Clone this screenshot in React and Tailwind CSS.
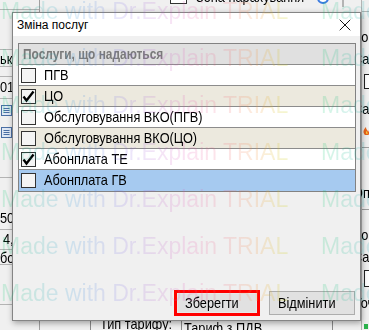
import { X } from "lucide-react";

const sans = "font-['Liberation_Sans',sans-serif]";

const services = [
  { label: "ПГВ", checked: false, tone: "white" },
  { label: "ЦО", checked: true, tone: "beige" },
  { label: "Обслуговування ВКО(ПГВ)", checked: false, tone: "white" },
  { label: "Обслуговування ВКО(ЦО)", checked: false, tone: "beige" },
  { label: "Абонплата ТЕ", checked: true, tone: "white" },
  { label: "Абонплата ГВ", checked: false, tone: "selected" },
];

const rowTone = {
  white: "bg-white",
  beige: "bg-[#ece9de]",
  selected: "bg-[#a6caf0]",
};

// the app uses a narrow face (Arial Narrow); squeeze Liberation Sans to match
function Narrow({ children, className = "" }) {
  return (
    <span className={`inline-block origin-left scale-x-[0.85] whitespace-nowrap ${className}`}>
      {children}
    </span>
  );
}

function CheckBox({ checked }) {
  return (
    <span className="flex h-[15px] w-[15px] shrink-0 items-center justify-center border border-[#333] bg-[#f4f4f4]">
      {checked && (
        <svg width="13" height="13" viewBox="0 0 13 13">
          <path
            d="M1.5 6.5 L4.5 10.5 L11.5 1.5"
            fill="none"
            stroke="#000"
            strokeWidth="2.3"
          />
        </svg>
      )}
    </span>
  );
}

function DocIcon() {
  return (
    <svg width="14" height="13" viewBox="0 0 14 13">
      <rect x="1.5" y="1.5" width="10" height="10" fill="#dfe8f5" stroke="#4a6fa5" />
      <path d="M3.5 4.5h6M3.5 6.5h6M3.5 8.5h6" stroke="#4a6fa5" />
    </svg>
  );
}

function FlameIcon() {
  return (
    <svg width="12" height="12" viewBox="0 0 12 12">
      <path d="M3 11 C0 8 2 5 4 3 C4 6 6 6 6 8 C7 7 7 6 7 5 C9 7 9 10 6 11 Z" fill="#e8641b" />
      <path d="M4.5 10 C3.5 8.5 4 7.5 5 7 C5 8.5 6 9 5.5 10 Z" fill="#ffd23c" />
      <path d="M8 2.5h4M10 0.5v4" stroke="#1fae2b" strokeWidth="1.6" />
    </svg>
  );
}

function Watermark() {
  const rows = [0, 1, 2, 3, 4, 5, 6, 7];
  return (
    <div className="pointer-events-none absolute inset-0 overflow-hidden">
      <div className={`mt-[-12px] pl-[1px] text-[23px] leading-[47px] ${sans}`}>
        {rows.map((r) => (
          <div key={r} className="flex whitespace-nowrap">
            {[0, 1].map((k) => (
              <span
                key={k}
                className="inline-block w-[320px] shrink-0 bg-[linear-gradient(90deg,rgba(0,200,100,0.17)_0%,rgba(40,150,220,0.17)_22%,rgba(130,100,230,0.16)_39%,rgba(230,80,180,0.16)_58%,rgba(240,90,110,0.16)_70%,rgba(245,150,60,0.18)_80%,rgba(200,220,20,0.22)_91%)] bg-clip-text text-transparent"
              >
                Made with Dr.Explain TRIAL
              </span>
            ))}
          </div>
        ))}
      </div>
    </div>
  );
}

function Background() {
  return (
    <div className={`flex h-full text-[15px] text-black ${sans}`}>
      {/* left column of the app behind */}
      <div className="flex w-[40px] shrink-0 flex-col overflow-hidden border-r border-[#a0a0a0]">
        <div className="h-[10px] border-b border-[#b4b4b4]" />
        <div className="h-[40px] border-b border-[#b4b4b4]" />
        <div className="flex h-[17px] items-center border-b border-[#b4b4b4] leading-none">
          <Narrow>ькість</Narrow>
        </div>
        <div className="h-[10px] border-b border-[#b4b4b4]" />
        <div className="flex h-[22px] items-center border-b border-[#b4b4b4]">
          <Narrow>01.01.2020</Narrow>
        </div>
        <div className="flex h-[22px] items-center">
          <DocIcon />
        </div>
        <div className="flex h-[22px] items-center">
          <DocIcon />
        </div>
        <div className="h-[35px] border-b border-[#b4b4b4]" />
        <div className="h-[30px]" />
        <div className="flex h-[22px] items-center border-b border-[#b4b4b4]">
          <Narrow>50,00</Narrow>
        </div>
        <div className="flex h-[20px] items-center border-b border-[#b4b4b4] pl-[3px]">
          <Narrow>4,5</Narrow>
        </div>
        <div className="flex h-[15px] items-center border-b border-[#b4b4b4] leading-none">
          <Narrow>бойлер</Narrow>
        </div>
        <div className="h-[40px] border-b border-[#b4b4b4]" />
        <div className="flex-1" />
      </div>

      {/* center, only its top and bottom edges show */}
      <div className="flex w-[321px] shrink-0 flex-col bg-[#f0f0f0]">
        <div className="flex h-[12px] items-start overflow-hidden">
          <div className="mt-[-10px] flex h-[14px] items-center">
            <span className="ml-[130px] h-[14px] w-[17px] border border-[#333] bg-white" />
            <span className="ml-[9px] w-[109px]">
              <Narrow>Зона нарахування</Narrow>
            </span>
            <span className="ml-[12px] h-[14px] w-[12px] rounded-full border-2 border-[#3b7be0] bg-white" />
            <span className="ml-[13px] h-[20px] w-[2px] border-x border-[#b4b4b4]" />
          </div>
        </div>
        <div className="flex-1" />
        <div className="flex h-[14px] items-start overflow-hidden">
          <span className="ml-[50px] h-full border-l border-[#8a8a8a]" />
          <span className="ml-[9px] mt-[-3px] w-[81px]">
            <Narrow>Тип тарифу:</Narrow>
          </span>
          <span className="h-full w-[148px] border-l border-t border-[#8a8a8a] pl-[2px]">
            <Narrow className="mt-[-3px]">Тариф з ПДВ</Narrow>
          </span>
          <span className="ml-[3px] h-full border-l border-[#8a8a8a]" />
        </div>
      </div>

      {/* right column labels, their starts hidden behind the dialog */}
      <div className="flex flex-1 flex-col border-l border-[#b4b4b4]">
        <div className="h-[12px] border-b border-[#b4b4b4]" />
        <div className="flex h-[34px] items-end leading-[18px]">
          <Narrow className="ml-[-10px]">Норма</Narrow>
        </div>
        <div className="flex h-[22px] items-end leading-[18px]">
          <Narrow className="ml-[-9px]">Сальдо</Narrow>
        </div>
        <div className="flex h-[26px] items-center pl-[2px]">
          <span className="h-[15px] w-[30px] border border-[#222] bg-white" />
        </div>
        <div className="flex h-[24px] items-end leading-[18px]">
          <Narrow className="ml-[-9px]">Сальдо</Narrow>
        </div>
        <div className="flex h-[24px] items-center">
          <FlameIcon />
        </div>
        <div className="h-[6px] border-b border-[#a0a0a0]" />
        <div className="flex h-[54px] items-end leading-[18px]">
          <Narrow className="ml-[-9px]">Оплата</Narrow>
        </div>
        <div className="h-[8px] border-b border-[#a0a0a0]" />
        <div className="flex h-[34px] items-end leading-[18px]">
          <Narrow className="ml-[-10px]">Норма</Narrow>
        </div>
        <div className="flex h-[22px] items-end leading-[18px]">
          <Narrow className="ml-[-9px]">Сальдо</Narrow>
        </div>
        <div className="flex h-[24px] items-center pl-[2px]">
          <span className="h-[17px] w-[30px] border border-[#222] bg-white" />
        </div>
        <div className="flex h-[22px] items-end leading-[18px]">
          <Narrow className="ml-[-8px]">Точка</Narrow>
        </div>
        <div className="flex flex-1 items-end">
          <span className="mb-[1px] ml-[2px] h-[5px] w-[4px] bg-[#2bb24c]" />
        </div>
      </div>
    </div>
  );
}

function ServiceDialog() {
  return (
    <div className="absolute left-[12px] top-[12px] flex h-[309px] w-[349px] flex-col border border-[#858585] bg-[#f0f0f0] shadow-[1px_2px_6px_rgba(0,0,0,0.35)]">
      <div className="flex h-[23px] shrink-0 items-center justify-between bg-white pl-[4px] pr-[5px]">
        <span className={`text-[12px] text-black ${sans}`}>Зміна послуг</span>
        <X size={20} strokeWidth={1.1} className="text-black" />
      </div>

      <div className={`flex flex-1 flex-col pb-[4px] pl-[5px] pr-[4px] pt-[7px] ${sans}`}>
        <div className="border border-[#828282] bg-white">
          <div className="flex h-[21px] items-center border-b border-[#8c8c8c] bg-[#e0e0e0] pl-[4px] text-[14px] font-bold text-[#7a7a7a]">
            <Narrow className="scale-x-[0.8]">Послуги, що надаються</Narrow>
          </div>
          {services.map((s, i) => (
            <div
              key={s.label}
              className={`flex h-[21px] items-center gap-[8px] pl-[2px] text-[15px] text-black ${rowTone[s.tone]} ${
                i < services.length - 1 ? "border-b border-[#8c8c8c]" : ""
              }`}
            >
              <CheckBox checked={s.checked} />
              <Narrow>{s.label}</Narrow>
            </div>
          ))}
        </div>

        <div className="flex-1" />

        <div className="flex items-center justify-end gap-[9px] pr-[1px]">
          <div className="flex h-[26px] w-[86px] border-[3px] border-[#ff0000] bg-[#e1e1e1]">
            <button
              type="button"
              className="flex flex-1 items-center justify-center border border-[#e8e8e8] text-[15px] text-black"
            >
              <Narrow className="origin-center">Зберегти</Narrow>
            </button>
          </div>
          <button
            type="button"
            className="flex h-[24px] w-[86px] items-center justify-center border border-[#adadad] bg-[#e1e1e1] text-[15px] text-black"
          >
            <Narrow className="origin-center">Відмінити</Narrow>
          </button>
        </div>
      </div>
    </div>
  );
}

export default function App() {
  return (
    <div className="relative h-[330px] w-[369px] overflow-hidden bg-[#f0f0f0]">
      <Background />
      <ServiceDialog />
      <Watermark />
    </div>
  );
}
